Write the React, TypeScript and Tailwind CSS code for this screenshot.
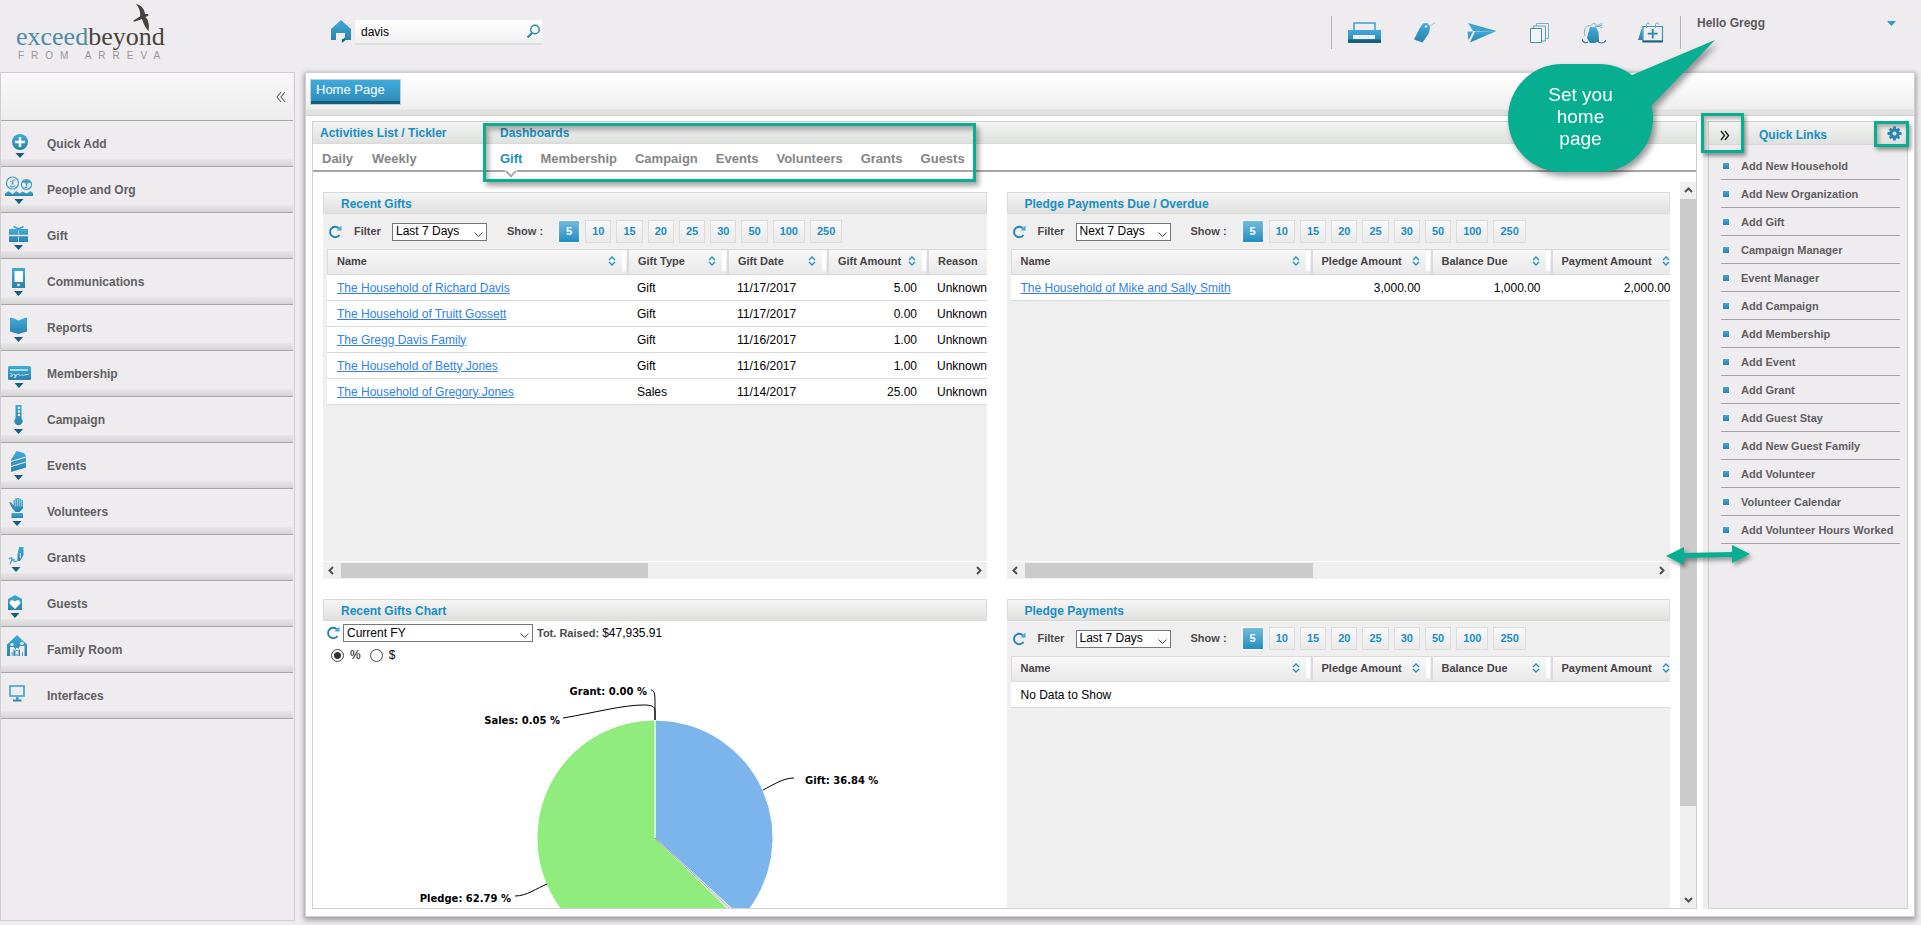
import { useState, ReactNode } from 'react'

interface Column {
  title: string
  width: number
  right?: boolean
}

interface PanelProps {
  title: string
  children: ReactNode
  className?: string
}

const GIFT_COLUMNS: Column[] = [
  { title: 'Name', width: 300 },
  { title: 'Gift Type', width: 100 },
  { title: 'Gift Date', width: 100 },
  { title: 'Gift Amount', width: 100, right: true },
  { title: 'Reason', width: 120 },
]

const PLEDGE_COLUMNS: Column[] = [
  { title: 'Name', width: 300 },
  { title: 'Pledge Amount', width: 120, right: true },
  { title: 'Balance Due', width: 120, right: true },
  { title: 'Payment Amount', width: 130, right: true },
]

const GIFTS = [
  ['The Household of Richard Davis', 'Gift', '11/17/2017', '5.00', 'Unknown'],
  ['The Household of Truitt Gossett', 'Gift', '11/17/2017', '0.00', 'Unknown'],
  ['The Gregg Davis Family', 'Gift', '11/16/2017', '1.00', 'Unknown'],
  ['The Household of Betty Jones', 'Gift', '11/16/2017', '1.00', 'Unknown'],
  ['The Household of Gregory Jones', 'Sales', '11/14/2017', '25.00', 'Unknown'],
]

const PLEDGES = [['The Household of Mike and Sally Smith', '3,000.00', '1,000.00', '2,000.00']]

const PAGE_SIZES = [5, 10, 15, 20, 25, 30, 50, 100, 250]

const DASHBOARDS = ['Gift', 'Membership', 'Campaign', 'Events', 'Volunteers', 'Grants', 'Guests']

const QUICK_LINKS = [
  'Add New Household',
  'Add New Organization',
  'Add Gift',
  'Campaign Manager',
  'Event Manager',
  'Add Campaign',
  'Add Membership',
  'Add Event',
  'Add Grant',
  'Add Guest Stay',
  'Add New Guest Family',
  'Add Volunteer',
  'Volunteer Calendar',
  'Add Volunteer Hours Worked',
]

// caret = x position of the little arrow below the icon
const MENU: { label: string; caret?: number; icon: ReactNode }[] = [
  {
    label: 'Quick Add',
    caret: 20,
    icon: (
      <>
        <circle cx="20" cy="21" r="8" />
        <path d="M20 16v10M15 21h10" stroke="#fff" strokeWidth="2.4" />
      </>
    ),
  },
  {
    label: 'People and Org',
    caret: 19,
    icon: (
      <>
        <g fill="none" stroke="#3a9fcd" strokeWidth="1.2">
          <circle cx="12.5" cy="16" r="6" />
          <circle cx="26.5" cy="17.5" r="5" />
          <path d="M10 14.500h1.500M13.500 13h2M12.800 13v4h-1.500M10 19c2 1.500 4 1 5-.5M25 16h3.500M26.500 16v3h-1M24.500 20.500h3" />
        </g>
        <path d="M22 15.500c1-3.500 8-3.500 9 0z" />
        <path d="M5 29v-2.500l3.500-2.500 2 1.500 2 1.500 4-3 3 2.500 3-2 4 2 4-2.500 2.500 2V29z" />
      </>
    ),
  },
  {
    label: 'Gift',
    caret: 18.5,
    icon: (
      <>
        <path d="M9 16h19v13H9z" />
        <path d="M18.500 16l-5-2.500M18.500 16l5-2.500" stroke="#3a9fcd" strokeWidth="1.600" />
        <path d="M9 22.500h19" stroke="#eeecee" strokeWidth="1.400" />
        <path d="M18.500 17v12" stroke="#9fcfe4" />
      </>
    ),
  },
  {
    label: 'Communications',
    caret: 18.5,
    icon: (
      <>
        <path d="M12 9h13v20H12z" />
        <path d="M14.500 12h8.500v11h-8.500z" fill="#fff" />
        <circle cx="18.500" cy="26" r="1.300" fill="#fff" />
      </>
    ),
  },
  {
    label: 'Reports',
    caret: 18.5,
    icon: <path d="M10 13l1.500-.5 7 3 7-3 1.500.5v13.500l-8.500 2.500-8.500-2.500z" />,
  },
  {
    label: 'Membership',
    caret: 19,
    icon: (
      <>
        <rect x="8" y="15" width="23" height="14" rx="1.500" />
        <path d="M10 19h18" stroke="#d6ecf6" strokeWidth="1.500" />
        <path
          d="M10 23c2-1.500 2.500 0 1 1.500s1 1.500 2-.5 2-1 1.500.5 2-2 1.500.5-2 3-1 .5 3-1.500 3.500-2.500 0 2 2 1.500 1.500-2 2-.5 2-1 6-.5"
          fill="none"
          stroke="#c7e3f0"
        />
      </>
    ),
  },
  {
    label: 'Campaign',
    caret: 18.5,
    icon: (
      <>
        <path d="M15.500 8h6v13.500a4 4 0 1 1-6 0z" />
        <path d="M18 10h2v2h-2zM18 13.500h2v2h-2zM18 17h2v2h-2z" fill="#fff" />
      </>
    ),
  },
  {
    label: 'Events',
    caret: 18.5,
    icon: (
      <>
        <path d="M16.500 8l7.500 2 2 3v11.500L11 29V17z" />
        <path d="M11 18.500l15-4.500M11 23.500l15-4.500" stroke="#eeecee" strokeWidth="1.300" />
      </>
    ),
  },
  {
    label: 'Volunteers',
    caret: 17,
    icon: (
      <>
        <path d="M9 13.500l2-.5 2.500 3.500V11h1.700V9.500h2V9h2v.7h2V11H23v8.500l-3.500 3.500h-4L12 19z" />
        <path d="M15.300 11v6.500M17.500 10v7.500M19.700 10v7.500M21.600 11v6.500" stroke="#eeecee" strokeWidth=".6" />
        <path d="M11.500 24h11.500v5H11.500z" />
      </>
    ),
  },
  {
    label: 'Grants',
    caret: 16,
    icon: (
      <>
        <path d="M19 12h4.500v8L20 26h-2.500v-6z" />
        <path d="M20.300 18v5" stroke="#eeecee" />
        <path
          d="M9 24c2-2 4-2 2.500 1.500S9.500 30 11 27s3.500-3.500 3-1.500 1 .5 3.500.5"
          fill="none"
          stroke="#4ba3c9"
          strokeWidth="1.200"
        />
      </>
    ),
  },
  {
    label: 'Guests',
    caret: 15,
    icon: (
      <>
        <path d="M8 18l7-4 7 4v11H8z" />
        <path d="M15 28l-5-5c-1.500-3 2-5.500 5-2.500 3-3 6.500-.5 5 2.500z" fill="#fff" />
      </>
    ),
  },
  {
    label: 'Family Room',
    icon: (
      <>
        <path d="M7 17.500L17 8l10 9.500V29H7z" />
        <g fill="#eeecee">
          <circle cx="12" cy="17.500" r="1.600" />
          <circle cx="22" cy="16.500" r="1.800" />
          <circle cx="17" cy="22" r="1.200" />
          <path d="M10 20h4l2 3.500-.8.500-1.700-2V29h-1v-4h-.8v4H10zM20 19h4.500v10H23v-4h-.8v4H20v-7l-2 2-.7-.5zM15.500 24h3v5h-1v-2h-1v2h-1z" />
        </g>
      </>
    ),
  },
  {
    label: 'Interfaces',
    icon: (
      <>
        <path d="M10 13h14v10H10z" fill="none" stroke="#3a9fcd" strokeWidth="1.600" />
        <path d="M16 24h2.500v2.500h3V28.500h-8.500V26.500h3z" />
      </>
    ),
  },
]

function Logo() {
  return (
    <svg width="160" height="64" viewBox="0 0 160 64" className="shrink-0" aria-label="exceedbeyond from Arreva">
      <text x="6" y="45" fontFamily="Liberation Serif, serif" fontSize="26">
        <tspan fill="#4d8ba6">exceed</tspan>
        <tspan fill="#4a4340">beyond</tspan>
      </text>
      <text x="8" y="59" fontFamily="Liberation Sans, sans-serif" fontSize="10" fill="#98969a" className="tracking-[7px]">
        FROM ARREVA
      </text>
      <path
        d="M126 4c5 1 8 4 9 10l2 0c1 0 1.500.5 1.500 1.500l-3 1.500c3 3 4 8 3 14-2-2-5-7-6.500-12l-7 2.500c-1 .3-2-.3-1.500-1l6.500-4c1-4-1-9-4-12.500z"
        fill="#463f3c"
      />
    </svg>
  )
}

function HeaderIcons() {
  return (
    <div className="flex h-[33px] items-center gap-8 border-x border-[#b3b1b3] px-4">
      <button aria-label="Print">
        <svg width="33" height="22" viewBox="0 0 33 22">
          <path d="M6 8V1h21v7" fill="none" stroke="#3f9fc8" strokeWidth="1.500" />
          <path d="M0 8h33v13H0z" fill="url(#blue)" />
          <path d="M0 17.500h33V21H0z" fill="#165f7e" />
          <path d="M5 13h22v4H5z" fill="#eeecee" />
        </svg>
      </button>
      <button aria-label="Tags">
        <svg width="22" height="22" viewBox="0 0 22 22">
          <path d="M6.500 6.500L10 1.500l4.500-.5 2.500 4-1 6-6.500 9.500L1 17.500z" fill="url(#blue)" />
          <circle cx="13" cy="4.500" r="1.300" fill="#eeecee" />
          <path d="M13 4c2-3 4 1 6-1 1-1 1-2 3-2" fill="none" stroke="#8fc3da" />
        </svg>
      </button>
      <button aria-label="Send">
        <svg width="30" height="22" viewBox="0 0 30 22">
          <path d="M1 1l28.500 8H6z" fill="#3fa3d0" />
          <path d="M8 9.500L29.500 9 3 20.500z" fill="url(#blue)" />
          <path d="M.5 9.500h5.500L1.500 18z" fill="url(#blue)" />
        </svg>
      </button>
      <button aria-label="Copies">
        <svg width="21" height="22" viewBox="0 0 21 22">
          <g fill="#f4f3f4" stroke="#3f8eb0">
            <path d="M7.500 1.500h12v15h-12z" stroke="#6fb4d2" />
            <path d="M4.500 4h12v15h-12z" stroke="#57a2c4" />
            <path d="M1.500 6.500h11v14h-11z" />
          </g>
        </svg>
      </button>
      <button aria-label="Activity">
        <svg width="24" height="22" viewBox="0 0 24 22">
          <path d="M8 5l6 .5 2.500 4.500.5 9-4 2H8l-3-5z" fill="url(#blue)" />
          <path
            d="M3 14c-1.500-5 0-9 2.500-10s2.500 1 4-1 3-2 5 0 3-2 6-1M10 6c4-2 6-1 10-3M13 4c2 1 4-1 7 2"
            fill="none"
            stroke="#6fb4d2"
          />
          <path d="M0 17c1 4 4 4 6 3M15 18c2 4 7 4 9 0" fill="none" stroke="#2a7697" strokeWidth="1.200" />
        </svg>
      </button>
      <button aria-label="Calendar">
        <svg width="26" height="22" viewBox="0 0 26 22">
          <path d="M4 5L0 18h5z" fill="url(#blue)" />
          <path d="M5 4.500h19.500V19H5z" fill="#eeecee" stroke="#3a94ba" strokeWidth="1.200" />
          <path d="M4.500 18.500h20.500v2H4.500z" fill="#1d6483" />
          <path d="M14.700 7v9.500M9.800 11.700h9.800" stroke="#2b87ae" strokeWidth="1.800" />
          <path d="M8.500 6V2.500c0-2 3-2 3 0M17.500 6V2.500c0-2 3-2 3 0" fill="none" stroke="#5baccd" />
        </svg>
      </button>
    </div>
  )
}

function Callout() {
  return (
    <div className="pointer-events-none absolute top-[38px] right-[206px] z-20 h-[140px] w-[210px] drop-shadow-[3px_4px_3px_rgba(0,0,0,0.4)]">
      <svg width="210" height="140" viewBox="0 0 210 140" className="absolute inset-0" fill="#07ae90">
        <path d="M127 37L210 2l-64 66z" />
        <rect x="3" y="26" width="145" height="108" rx="54" />
      </svg>
      <p className="relative ml-[3px] w-[145px] pt-[46px] text-center text-[19px] leading-[22px] text-white">
        Set you
        <br />
        home
        <br />
        page
      </p>
    </div>
  )
}

function Header() {
  const [search, setSearch] = useState('davis')
  return (
    <header className="relative flex h-[72px] shrink-0 items-start">
      <div className="flex w-[331px] shrink-0 pl-[10px]">
        <Logo />
      </div>
      <a href="#" aria-label="Home" className="mt-5 mr-1 shrink-0">
        <svg width="20" height="23" viewBox="0 0 20 23">
          <path d="M0 9l10-9 10 9v11H0z" fill="url(#blue)" />
          <path d="M5 20v-7h9v4l-3 3v2H5z" fill="#eeecee" />
          <path d="M11 23v-4l4 .5z" fill="#165f7e" />
        </svg>
      </a>
      <div className="mt-5 flex h-[25px] w-[187px] items-center border-b-2 border-[#dedddf] bg-linear-to-b from-white to-[#f1f0f1] pr-px pl-[6px]">
        <input
          aria-label="Search"
          className="min-w-0 flex-1 bg-transparent text-[12px] text-black outline-none"
          value={search}
          onChange={(e) => setSearch(e.target.value)}
        />
        <button aria-label="Go">
          <svg width="15" height="15" viewBox="0 0 15 15" fill="none" stroke="#2b87ae" strokeWidth="1.500">
            <circle cx="9" cy="5.500" r="4.300" />
            <path d="M6 9l-4.500 4.500" strokeWidth="2" />
          </svg>
        </button>
      </div>
      <div className="ml-auto pt-4">
        <HeaderIcons />
      </div>
      <button className="flex w-[240px] items-center justify-between pt-[15px] pr-[25px] pl-4 text-[12px] leading-4 font-bold text-[#5a585a]">
        Hello Gregg
        <svg width="9" height="5" viewBox="0 0 9 5">
          <path d="M0 0h9L4.500 5z" fill="#2f9ccb" />
        </svg>
      </button>
      <Callout />
    </header>
  )
}

function Sidebar() {
  return (
    <aside className="flex w-[295px] shrink-0 flex-col border border-[#cfcecf] pr-px">
      <div className="flex h-[48px] shrink-0 items-center justify-end border-b border-[#a9a8a9] bg-linear-to-b from-[#f8f8f8] to-[#eeedee] pr-[7px]">
        <button aria-label="Collapse menu">
          <svg width="10" height="12" viewBox="0 0 10 12" fill="none" stroke="#666" strokeWidth="1.100">
            <path d="M5 1L1 6l4 5M9 1L5 6l4 5" />
          </svg>
        </button>
      </div>
      <nav>
        {MENU.map((item) => (
          <a
            key={item.label}
            href="#"
            className="flex h-[46px] items-center border-b border-[#a9a8a9] bg-[linear-gradient(to_bottom,#eeecee_38px,#e8e6e8_38px,#d5d4d5_45px)] text-[12px] font-bold text-[#606064]"
          >
            <svg width="46" height="45" viewBox="1 0 46 45" fill="url(#blue)">
              {item.icon}
              {item.caret && <path d={`M${item.caret - 4.5} 32h9l-4.500 5z`} fill="#155d7c" />}
            </svg>
            <span className="pt-px">{item.label}</span>
          </a>
        ))}
      </nav>
    </aside>
  )
}

function Panel({ title, children, className = '' }: PanelProps) {
  return (
    <section className={`flex min-w-0 flex-col overflow-hidden ${className}`}>
      <h2 className="h-[22px] shrink-0 border border-[#dadada] bg-linear-to-b from-[#f5f5f5] to-[#dfe1de] pl-[17px] text-[12px] leading-[22px] font-bold text-[#1b8ec4]">
        {title}
      </h2>
      {children}
    </section>
  )
}

function Refresh() {
  return (
    <button aria-label="Refresh">
      <svg width="14" height="14" viewBox="0 0 14 14">
        <path d="M10.800 3.200A5.200 5.200 0 1 0 11.500 10" fill="none" stroke="#2484ad" strokeWidth="1.900" />
        <path d="M8.500 5.500h5V.5z" fill="#3fa9d8" />
      </svg>
    </button>
  )
}

function Select({ label, options, className }: { label: string; options: string[]; className: string }) {
  return (
    <span className={`relative inline-flex ${className}`}>
      <select
        aria-label={label}
        className="h-full w-full appearance-none border border-[#777] bg-white pl-[3px] text-[12px] leading-[15px] font-normal text-black"
      >
        {options.map((o) => (
          <option key={o}>{o}</option>
        ))}
      </select>
      <svg
        width="9"
        height="6"
        viewBox="0 0 9 6"
        fill="none"
        stroke="#444"
        className="pointer-events-none absolute right-1 bottom-[3px]"
      >
        <path d="M.5.5l4 4 4-4" />
      </svg>
    </span>
  )
}

function Toolbar({ filter }: { filter: string }) {
  const [size, setSize] = useState(5)
  return (
    <div className="flex h-[35px] shrink-0 items-center pl-[5px] text-[11px] font-bold text-[#4c4a4c]">
      <Refresh />
      <span className="ml-3 w-[38px]">Filter</span>
      <Select label={`${filter} filter`} options={[filter, 'Last 30 Days']} className="h-[18px] w-[95px]" />
      <span className="ml-5 w-[51px]">Show :</span>
      <div className="flex gap-[5px]">
        {PAGE_SIZES.map((n) => (
          <button
            key={n}
            onClick={() => setSize(n)}
            className={
              n === size
                ? 'h-[23px] border border-white bg-linear-to-b from-[#6fbbdc] to-[#1a8fc2] px-[7px] text-white'
                : 'h-[23px] border border-[#dcdcdc] bg-linear-to-b from-[#f8f8f8] to-[#eaeaea] px-[6px] text-[#1b8ec4]'
            }
          >
            {n}
          </button>
        ))}
      </div>
    </div>
  )
}

function DataTable({ columns, rows }: { columns: Column[]; rows: string[][] }) {
  return (
    <div className="ml-1 overflow-hidden">
      <table className="w-[670px] table-fixed border-separate border-spacing-0 text-[12px] text-black">
        <colgroup>
          {columns.map((c) => (
            <col key={c.title} style={{ width: c.width }} />
          ))}
        </colgroup>
        <thead>
          <tr>
            {columns.map((c) => (
              <th
                key={c.title}
                className="border-y border-l-2 border-[#dadada] bg-linear-to-b from-[#f8f8f8] to-[#e9e9e9] px-0 pt-px pb-[3px] pl-[9px] text-left text-[11px] font-bold whitespace-nowrap text-[#464446] first:border-l"
              >
                <div className="flex h-[20px] items-center justify-between">
                  {c.title}
                  <span className="flex items-center gap-[6px] self-stretch pr-[1px]">
                    <svg width="8" height="10" viewBox="0 0 8 10" fill="none" stroke="#2191c4" strokeWidth="1.400">
                      <path d="M1 4l3-3 3 3M1 6l3 3 3-3" />
                    </svg>
                    <span className="w-1 self-stretch bg-white" />
                  </span>
                </div>
              </th>
            ))}
          </tr>
        </thead>
        <tbody>
          {rows.map((row) => (
            <tr key={row[0]}>
              {row.map((cell, i) => (
                <td
                  key={i}
                  className={`h-[26px] overflow-hidden border-b border-[#dadada] bg-white px-[10px] py-0 whitespace-nowrap ${
                    columns[i].right ? 'text-right' : 'text-left'
                  }`}
                >
                  {i === 0 ? (
                    <a href="#" className="text-[#2f80f0] underline">
                      {cell}
                    </a>
                  ) : (
                    cell
                  )}
                </td>
              ))}
            </tr>
          ))}
          {rows.length === 0 && (
            <tr>
              <td colSpan={columns.length} className="h-[26px] border-b border-[#dadada] bg-white px-[10px] py-0">
                No Data to Show
              </td>
            </tr>
          )}
        </tbody>
      </table>
    </div>
  )
}

function Chevron({ d, className = '' }: { d: string; className?: string }) {
  return (
    <svg width="9" height="9" viewBox="0 0 9 9" fill="none" stroke="#505050" strokeWidth="2" className={className}>
      <path d={d} />
    </svg>
  )
}

function HScroll({ thumb }: { thumb: string }) {
  return (
    <div className="mt-auto flex h-[18px] shrink-0 items-center gap-[5px] border-t border-white px-1">
      <Chevron d="M6 1L2.500 4.500 6 8" />
      <div className="h-[15px] flex-1">
        <div className={`h-full bg-[#cbcbcb] ${thumb}`} />
      </div>
      <Chevron d="M3 1l3.500 3.500L3 8" />
    </div>
  )
}

function GiftsPie() {
  return (
    <svg
      width="500"
      height="300"
      viewBox="0 0 500 300"
      className="mx-auto block"
      fontFamily="DejaVu Sans, sans-serif"
      fontSize="10"
      fontWeight="bold"
    >
      <g stroke="#fff">
        <path d="M250 176V58A118 118 0 0 1 336.900 255.900z" fill="#7cb5ec" />
        <path d="M250 176L334.900 257.900A118 118 0 1 1 250 58z" fill="#90ed7d" />
      </g>
      <path d="M250 176l86 80.900" stroke="#555" strokeWidth=".6" />
      <g fill="none" stroke="#000">
        <path d="M246 28c4 0 4 6 4 14v16" />
        <path d="M158 56c30-5 60-13 80-13 8 0 12 1 12 6v9" />
        <path d="M358 128c10-5 20-12 31-12" />
        <path d="M142 222c-10 4-20 12-32 12" />
      </g>
      <text x="242" y="33" textAnchor="end">
        Grant: 0.00 %
      </text>
      <text x="155" y="62" textAnchor="end">
        Sales: 0.05 %
      </text>
      <text x="400" y="122">
        Gift: 36.84 %
      </text>
      <text x="106" y="240" textAnchor="end">
        Pledge: 62.79 %
      </text>
    </svg>
  )
}

function GiftsChart() {
  const [unit, setUnit] = useState('%')
  return (
    <Panel title="Recent Gifts Chart" className="bg-white">
      <div className="flex items-center gap-[3px] pt-[3px] pl-[3px] text-[12px]">
        <Refresh />
        <Select label="Period" options={['Current FY', 'Last FY']} className="h-[18px] w-[190px]" />
        <span className="ml-px text-[11px] font-bold text-[#4c4a4c]">Tot. Raised:</span>
        <span className="text-black">$47,935.91</span>
      </div>
      <div className="flex h-[20px] items-end gap-[9px] pl-2 text-[12px] leading-[14px] text-black">
        {['%', '$'].map((u) => (
          <label key={u} className="flex items-center gap-[6px]">
            <input
              type="radio"
              name="unit"
              checked={unit === u}
              onChange={() => setUnit(u)}
              className="size-[13px] appearance-none rounded-full border border-[#444] bg-white checked:bg-[radial-gradient(circle,#333_3px,#fff_4px)]"
            />
            {u}
          </label>
        ))}
      </div>
      <GiftsPie />
    </Panel>
  )
}

function Dashboard() {
  const [tab, setTab] = useState('Gift')
  return (
    <div className="flex min-w-0 flex-1 flex-col border border-[#d0d0d0] bg-white">
      <div className="flex h-[22px] shrink-0 items-center border-b border-[#d8d8d8] bg-linear-to-b from-[#f3f4f3] to-[#dfe1de] text-[12px] font-bold text-[#1b8ec4]">
        <h2 className="w-[187px] pl-[7px]">Activities List / Tickler</h2>
        <h2>Dashboards</h2>
      </div>
      <nav className="relative flex h-[28px] shrink-0 items-stretch border-b-2 border-[#a6a6a6] text-[13px] font-bold text-[#858585]">
        <div className="flex w-[187px] items-center gap-[19px] pt-1 pl-[9px]">
          <button>Daily</button>
          <button>Weekly</button>
        </div>
        <div className="flex items-center gap-[18px] pt-1">
          {DASHBOARDS.map((name) => (
            <button
              key={name}
              onClick={() => setTab(name)}
              className={tab === name ? 'relative self-stretch text-[#1b8ec4]' : ''}
            >
              {name}
              {tab === name && (
                <svg width="12" height="8" viewBox="0 0 12 8" className="absolute -bottom-2 left-1/2 -ml-[6px]">
                  <path d="M0 0h12v1.500L6 7.500 0 1.500z" fill="#fff" />
                  <path d="M1 .8l5 5.500 5-5.500" fill="none" stroke="#a6a6a6" strokeWidth="2" />
                </svg>
              )}
            </button>
          ))}
        </div>
        <div className="pointer-events-none absolute -top-[21px] left-[170px] h-[59px] w-[493px] border-3 border-[#07ae90] shadow-[3px_4px_5px_rgba(0,0,0,0.35),inset_3px_4px_5px_rgba(0,0,0,0.3)]" />
      </nav>
      <div className="flex min-h-0 flex-1 overflow-hidden">
        <div className="grid min-w-0 flex-1 auto-rows-max grid-cols-2 gap-5 pt-5 pr-[10px] pl-[10px]">
          <Panel title="Recent Gifts" className="h-[387px] bg-[#efefef]">
            <Toolbar filter="Last 7 Days" />
            <DataTable columns={GIFT_COLUMNS} rows={GIFTS} />
            <HScroll thumb="w-[49%]" />
          </Panel>
          <Panel title="Pledge Payments Due / Overdue" className="h-[387px] bg-[#efefef]">
            <Toolbar filter="Next 7 Days" />
            <DataTable columns={PLEDGE_COLUMNS} rows={PLEDGES} />
            <HScroll thumb="w-[46%]" />
          </Panel>
          <GiftsChart />
          <Panel title="Pledge Payments" className="bg-[#efefef]">
            <Toolbar filter="Last 7 Days" />
            <DataTable columns={PLEDGE_COLUMNS} rows={[]} />
          </Panel>
        </div>
        <div className="mt-[10px] flex w-4 shrink-0 flex-col items-center bg-[#efefef]">
          <Chevron d="M1 6l3.500-3.500L8 6" className="my-1 shrink-0" />
          <div className="h-[607px] w-full bg-[#cbcbcb]" />
          <Chevron d="M1 3l3.500 3.500L8 3" className="mt-auto mb-1 shrink-0" />
        </div>
      </div>
    </div>
  )
}

function QuickLinks() {
  return (
    <aside className="relative w-[200px] shrink-0 border border-[#cfcecf] bg-[#eeecee]">
      <div className="flex h-[23px] items-center border-b border-[#d8d8d8] bg-linear-to-b from-[#f3f4f3] to-[#dfe1de] pr-[5px] pl-[11px]">
        <button aria-label="Collapse quick links" className="mt-1">
          <svg width="10" height="11" viewBox="0 0 10 11" fill="none" stroke="#222" strokeWidth="1.400">
            <path d="M1 1l3.500 4.500L1 10M5 1l3.500 4.500L5 10" />
          </svg>
        </button>
        <h2 className="mt-1 ml-[29px] text-[12px] font-bold text-[#1b8ec4]">Quick Links</h2>
        <button aria-label="Settings" className="ml-auto">
          <svg width="15" height="15" viewBox="0 0 15 15">
            <path
              d="M7.500 .5v14M.5 7.500h14M2.700 2.700l9.600 9.600M12.300 2.700L2.700 12.300"
              stroke="#2a86b5"
              strokeWidth="2.800"
            />
            <circle cx="7.500" cy="7.500" r="5.200" fill="#2a86b5" />
            <circle cx="7.500" cy="7.500" r="2" fill="#e6e7e6" />
          </svg>
        </button>
      </div>
      <div className="pointer-events-none absolute -top-[9px] -left-2 h-[40px] w-[43px] border-3 border-[#07ae90] shadow-[2px_3px_4px_rgba(0,0,0,0.4),inset_2px_3px_4px_rgba(0,0,0,0.3)]" />
      <div className="pointer-events-none absolute -top-px -right-[2px] h-[26px] w-[35px] border-3 border-[#07ae90] shadow-[2px_3px_4px_rgba(0,0,0,0.4),inset_2px_3px_4px_rgba(0,0,0,0.3)]" />
      <ul className="pt-[7px] pr-[7px] pl-3">
        {QUICK_LINKS.map((link) => (
          <li key={link} className="h-[28px] border-b border-[#a3a2a3]">
            <a
              href="#"
              className="flex h-full items-center gap-3 pt-px pl-[2px] text-[11px] font-bold whitespace-nowrap text-[#5e5e62]"
            >
              <span className="size-[6px] bg-linear-to-b from-[#3fa9d8] to-[#2b82ab]" />
              {link}
            </a>
          </li>
        ))}
      </ul>
      {/* splitter hint */}
      <svg
        width="84"
        height="22"
        viewBox="0 0 84 22"
        fill="#07ae90"
        className="pointer-events-none absolute top-[422px] -left-[43px] drop-shadow-[2px_3px_2px_rgba(0,0,0,0.4)]"
      >
        <path d="M0 12L18 3v6l48-1V1l18 9-18 9v-6l-48 1v7z" />
      </svg>
    </aside>
  )
}

export default function App() {
  return (
    <div className="flex h-screen min-h-[600px] flex-col overflow-hidden bg-[#eeecee] font-['Liberation_Sans',Arial,sans-serif]">
      <svg width="0" height="0" className="absolute">
        <linearGradient id="blue" x1="0" y1="0" x2="0" y2="1">
          <stop offset="0" stopColor="#3fabdb" />
          <stop offset="1" stopColor="#2b82ab" />
        </linearGradient>
      </svg>
      <Header />
      <div className="flex min-h-0 flex-1 gap-[10px] pr-[6px] pb-1">
        <Sidebar />
        <main className="mb-1 flex min-w-0 flex-1 flex-col border border-[#cfcecf] bg-white shadow-[0_2px_5px_1px_rgba(0,0,0,0.35)]">
          <div className="mt-[6px] flex h-[37px] shrink-0 items-start border-b border-[#cfcfcf] bg-[linear-gradient(to_bottom,#fdfdfd,#eeeeee_30px,#e0e2df_31px)] pl-1">
            <button className="flex h-[26px] w-[91px] items-start border border-[#c5cdd2] bg-[linear-gradient(to_bottom,#3faadb,#2f8fbd_21px,#175d7b_21px)] pl-[5px] text-[13px] text-white">
              Home Page
            </button>
          </div>
          <div className="flex min-h-0 flex-1 pt-[5px] pr-[6px] pb-[7px] pl-[6px]">
            <Dashboard />
            <div className="ml-[6px] w-[5px] shrink-0 bg-[#eeecee]" />
            <QuickLinks />
          </div>
        </main>
      </div>
    </div>
  )
}
